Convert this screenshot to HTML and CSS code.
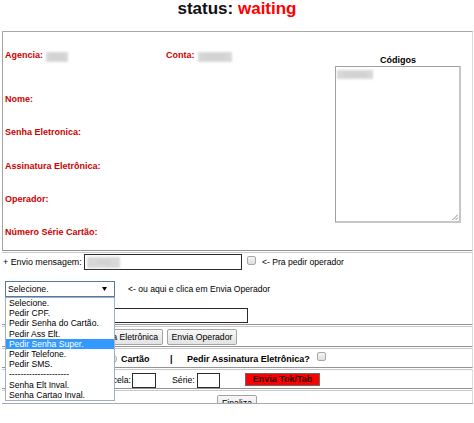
FILE: index.html
```html
<!DOCTYPE html>
<html lang="pt-BR">
<head>
<meta charset="utf-8">
<title>status: waiting</title>
<link rel="stylesheet" href="styles.css">
</head>
<body>
<h1 class="title">status: <span class="status-red">waiting</span></h1>
<div class="frame">
  <div class="sec sec-info">
    <div class="info-left">
      <div class="info-row">
        <div class="cell-agencia"><span class="lbl">Agencia:</span><span class="mask mask-ag">0001</span></div>
        <div class="cell-conta"><span class="lbl">Conta:</span><span class="mask mask-ct">000000</span></div>
      </div>
      <div class="info-row row-nome"><span class="lbl">Nome:</span></div>
      <div class="info-row"><span class="lbl">Senha Eletronica:</span></div>
      <div class="info-row"><span class="lbl">Assinatura Eletrônica:</span></div>
      <div class="info-row"><span class="lbl">Operador:</span></div>
      <div class="info-row"><span class="lbl">Número Série Cartão:</span></div>
    </div>
    <div class="info-right">
      <div class="codes-title">Códigos</div>
      <div class="codes-box">
        <span class="mask mask-code">000000</span>
        <svg class="grip" width="6" height="6" viewBox="0 0 6 6"><path d="M6 0.5L0.5 6M6 3.5L3.5 6" stroke="#8a8a8a" stroke-width="1" fill="none"/></svg>
      </div>
    </div>
  </div>

  <div class="sec sec-msg">
    <div class="msg-row row-envio">
      <span class="msg-label">+ Envio mensagem:</span>
      <span class="txt-input input-msg"><span class="mask mask-msg">msg</span></span>
      <span class="chk chk-op"></span>
      <span class="hint">&lt;- Pra pedir operador</span>
    </div>
    <div class="msg-row row-select">
      <div class="select-wrap">
        <div class="select">
          <span>Selecione.</span>
          <svg width="5" height="4" viewBox="0 0 5 4"><path d="M0 0H5L2.5 4Z" fill="#000"/></svg>
        </div>
        <ul class="dd-list">
          <li class="dd-item">Selecione.</li>
          <li class="dd-item">Pedir CPF.</li>
          <li class="dd-item">Pedir Senha do Cartão.</li>
          <li class="dd-item">Pedir Ass Elt.</li>
          <li class="dd-item is-active">Pedir Senha Super.</li>
          <li class="dd-item">Pedir Telefone.</li>
          <li class="dd-item">Pedir SMS.</li>
          <li class="dd-item">---------------------</li>
          <li class="dd-item">Senha Elt Inval.</li>
          <li class="dd-item">Senha Cartao Inval.</li>
        </ul>
      </div>
      <span class="hint hint-select">&lt;- ou aqui e clica em Envia Operador</span>
    </div>
    <div class="msg-row row-free">
      <span class="free-label"></span>
      <span class="txt-input input-free"></span>
    </div>
  </div>

  <div class="sec sec-btns">
    <button class="btn btn-senha">Envia Senha Eletrônica</button>
    <button class="btn btn-op">Envia Operador</button>
  </div>

  <div class="sec sec-pedir">
    <span class="pedir-left"></span>
    <span class="radio"></span>
    <span class="b-txt cartao">Cartão</span>
    <span class="b-txt sep">|</span>
    <span class="b-txt pedir-ass">Pedir Assinatura Eletrônica?</span>
    <span class="chk chk-ass"></span>
  </div>

  <div class="sec sec-tok">
    <span class="tok-label">Parcela:</span>
    <span class="txt-input input-small"></span>
    <span class="serie-label">Série:</span>
    <span class="txt-input input-small2"></span>
    <button class="btn-red">Envia Tok/Tab</button>
  </div>

  <div class="sec sec-fin">
    <button class="btn btn-fin">Finaliza</button>
  </div>
</div>
</body>
</html>
```
FILE: styles.css
```css
* { box-sizing: border-box; }

body {
  margin: 0;
  background: #fff;
  font-family: "Liberation Sans", Arial, sans-serif;
  font-size: 8.7px;
  color: #000;
}

.title {
  margin: 0 0 14px;
  height: 17px;
  line-height: 17px;
  font-size: 17px;
  font-weight: bold;
  text-align: center;
  color: #111;
}
.status-red { color: #f00; }

.frame {
  margin-left: 2px;
  width: 471px;
  height: 373px;
  border-bottom: 1px solid #a9a9a9;
  overflow: hidden;
  display: flex;
  flex-direction: column;
  gap: 1px;
}

.sec {
  flex: none;
  border-top: 1px solid #c8c8c8;
  border-bottom: 1px solid #949494;
  border-right: 1px solid #dcdcdc;
}

/* section 1 */
.sec-info {
  height: 220px;
  border-top-color: #a9a9a9;
  border-left: 1px solid #a3a3a3;
  display: flex;
}
.info-left {
  width: 332px;
  padding: 18px 0 0 2px;
  display: flex;
  flex-direction: column;
}
.info-row {
  display: flex;
  align-items: flex-start;
  height: 11px;
  line-height: 11px;
}
.info-row + .info-row { margin-top: 22.3px; }
.info-row.row-nome { margin-top: 33px; }
.lbl {
  color: #c00;
  font-weight: bold;
  font-size: 9px;
  white-space: nowrap;
}
.cell-agencia { width: 161px; display: flex; }
.cell-conta { display: flex; }

.mask {
  display: inline-block;
  height: 10px;
  margin-top: 2px;
  background: #d8d8d8;
  color: #c8c8c8;
  filter: blur(1.2px);
  overflow: hidden;
  font-size: 7px;
  line-height: 10px;
  text-align: center;
}
.mask-ag { width: 22px; margin-left: 3px; }
.mask-ct { width: 34px; margin-left: 3.5px; }

.info-right {
  width: 126px;
  padding-top: 23px;
}
.codes-title {
  height: 11px;
  line-height: 11px;
  text-align: center;
  font-weight: bold;
  font-size: 9px;
}
.codes-box {
  position: relative;
  height: 157px;
  border: 1px solid #a0a0a0;
  border-right: 2px solid #c6c6c6;
  border-bottom: 2px solid #c6c6c6;
  background: #fff;
  padding: 3px 1px;
}
.mask-code { width: 36px; height: 9px; margin-top: 0; }
.grip { position: absolute; right: 1px; bottom: 1px; }

/* section 2 */
.sec-msg {
  height: 73px;
  padding: 1px 0 1px 1px;
  display: flex;
  flex-direction: column;
}
.msg-row {
  display: flex;
  align-items: center;
  flex: none;
}
.row-envio { height: 16px; }
.row-select { height: 16px; margin-top: 11px; }
.row-free { height: 15px; margin-top: 11px; }

.msg-label {
  width: 81px;
  white-space: nowrap;
  font-size: 8.9px;
}
.txt-input {
  display: block;
  flex: none;
  height: 16px;
  border: 1px solid #2b2b2b;
  background: #fff;
}
.input-msg { width: 158px; padding: 2px 2px; }
.mask-msg { width: 33px; height: 11px; margin: 0; }

.chk {
  display: inline-block;
  flex: none;
  width: 9px;
  height: 9px;
  border: 1px solid #a9a9a9;
  border-radius: 2px;
  background: linear-gradient(#f5f5f5, #dedede);
}
.chk-op { margin: 0 0 4px 5px; }
.hint {
  margin-left: 6px;
  white-space: nowrap;
  font-size: 8.6px;
}
.hint-select { margin-left: 13px; }

.select-wrap {
  position: relative;
  margin-left: 2px;
  width: 110px;
  height: 16px;
  flex: none;
}
.select {
  height: 16px;
  border: 1px solid #56799f;
  background: #fff;
  display: flex;
  align-items: center;
  justify-content: space-between;
  padding: 0 7px 0 2px;
}
.dd-list {
  position: absolute;
  left: 0;
  top: 100%;
  width: 110px;
  margin: 0;
  padding: 0;
  list-style: none;
  border: 1px solid #9cb0c9;
  background: #fff;
  z-index: 5;
}
.dd-item {
  height: 10.2px;
  line-height: 10.2px;
  padding-left: 3px;
  font-size: 8.6px;
  white-space: nowrap;
}
.dd-item.is-active { background: #3399ff; color: #fff; }

.free-label { width: 77px; flex: none; }
.input-free { width: 168px; height: 15px; }

/* section 3 */
.sec-btns {
  height: 21px;
  display: flex;
  align-items: flex-start;
  gap: 4px;
  padding: 2px 0 0 61px;
}
.btn {
  height: 16px;
  padding: 0;
  border: 1px solid #a3a3a3;
  border-radius: 2px;
  background: linear-gradient(#f7f7f7, #e3e3e3);
  font-family: inherit;
  font-size: 8.7px;
  line-height: 14px;
  color: #000;
  text-align: center;
  white-space: nowrap;
}
.btn-senha { width: 100px; }
.btn-op { width: 70px; }

/* section 4 */
.sec-pedir {
  height: 20px;
  display: flex;
  align-items: flex-start;
  padding-left: 1px;
}
.pedir-left { width: 104px; flex: none; }
.radio {
  flex: none;
  width: 10px;
  height: 10px;
  margin-top: 5px;
  border-radius: 50%;
  border: 1px solid #a9a9a9;
  background: linear-gradient(#f6f6f6, #dedede);
}
.b-txt {
  font-weight: bold;
  font-size: 9px;
  line-height: 11px;
  margin-top: 5px;
  white-space: nowrap;
}
.cartao { width: 30px; margin-left: 4px; }
.sep { width: 3px; margin-left: 19px; }
.pedir-ass { margin-left: 14px; }
.chk-ass { margin: 3px 0 0 7px; }

/* section 5 */
.sec-tok {
  height: 20px;
  display: flex;
  align-items: flex-start;
}
.tok-label {
  width: 130px;
  padding-right: 1px;
  margin-top: 5px;
  line-height: 11px;
  text-align: right;
  white-space: nowrap;
}
.input-small { width: 24px; height: 15px; margin-top: 3px; }
.serie-label {
  width: 23px;
  margin: 5px 0 0 16px;
  line-height: 11px;
  white-space: nowrap;
}
.input-small2 { width: 23px; height: 15px; margin: 3px 0 0 2px; }
.btn-red {
  width: 75px;
  height: 13px;
  margin: 3px 0 0 25px;
  padding: 0;
  background: #f00;
  border: 1px solid #6a6a6a;
  color: #300;
  font-family: inherit;
  font-weight: bold;
  font-size: 9px;
  line-height: 11px;
  white-space: nowrap;
}

/* section 6 */
.sec-fin {
  flex: 1;
  border-bottom: none;
  display: flex;
  justify-content: center;
  padding-top: 4px;
}
.btn-fin { width: 40px; flex: none; }
```
